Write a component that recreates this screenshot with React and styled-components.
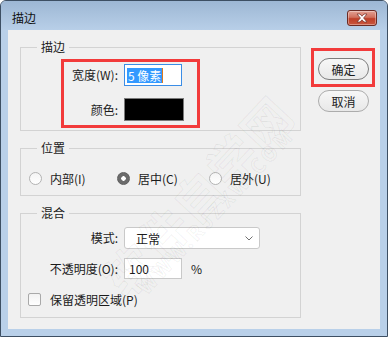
import React from "react";
import styled, { createGlobalStyle } from "styled-components";

const GlobalStyle = createGlobalStyle`
  html, body {
    margin: 0;
    padding: 0;
    background: #ffffff;
  }
  body {
    font-family: "Noto Sans CJK SC", "Microsoft YaHei", sans-serif;
    font-size: 12px;
    color: #1b1b1b;
  }
`;

const Window = styled.div`
  box-sizing: border-box;
  width: 388px;
  height: 337px;
  display: flex;
  flex-direction: column;
  padding: 0 7px 7px;
  border: 1px solid #3d4f63;
  border-radius: 6px 6px 0 0;
  background: #b9d0e9;
  overflow: hidden;
`;

const TitleBar = styled.div`
  box-sizing: border-box;
  height: 29px;
  margin: 0 -7px;
  padding: 5px 10px 0 11px;
  display: flex;
  align-items: center;
  justify-content: space-between;
  background: linear-gradient(#9db7d4, #b8cfe8);
`;

const Title = styled.span`
  font-size: 12px;
  line-height: 16px;
  color: #111;
`;

const CloseButton = styled.div`
  box-sizing: border-box;
  width: 30px;
  height: 16px;
  display: flex;
  align-items: center;
  justify-content: center;
  border: 1px solid #6b2b24;
  border-radius: 3px;
  background: linear-gradient(#e3a194 0%, #d1705d 45%, #bf3f28 55%, #c9573f 100%);
  box-shadow: inset 0 0 0 1px rgba(255, 255, 255, 0.35);
`;

const Client = styled.div`
  position: relative;
  flex: 1;
  display: flex;
  gap: 10px;
  padding: 10px 0 0 12px;
  background: #f0f0f0;
  overflow: hidden;
`;

const MainColumn = styled.div`
  width: 281px;
  display: flex;
  flex-direction: column;
  gap: 10px;
`;

const Group = styled.fieldset`
  margin: 0;
  padding: 0;
  min-inline-size: 0;
  border: 1px solid #d3d3d3;
`;

const Legend = styled.legend`
  margin-left: 16px;
  padding: 0 4px;
  font-size: 12px;
  line-height: 14px;
`;

const Marker = styled.div`
  border: 3px solid #f23b3b;
  width: fit-content;
  display: flex;
  flex-direction: column;
  gap: ${(p) => p.gap || 0}px;
  padding: ${(p) => p.pad};
  margin: ${(p) => p.margin || 0};
`;

const Row = styled.div`
  display: flex;
  align-items: center;
  margin-top: ${(p) => p.top || 0}px;
`;

const Label = styled.span`
  width: ${(p) => p.width}px;
  margin-right: 6px;
  text-align: right;
  white-space: nowrap;
  line-height: 14px;
`;

const WidthInput = styled.div`
  box-sizing: border-box;
  width: 58px;
  height: 22px;
  display: flex;
  align-items: center;
  padding-left: 2px;
  border: 1px solid #3b8de6;
  background: #fff;
`;

const Selection = styled.span`
  background: #3399ff;
  color: #fff;
  line-height: 15px;
  padding: 0 1px;
  white-space: nowrap;
`;

const Caret = styled.span`
  width: 1px;
  height: 15px;
  background: #e07a1c;
`;

const Swatch = styled.div`
  box-sizing: border-box;
  width: 60px;
  height: 23px;
  border: 1px solid #7a7a7a;
  background: ${(p) => p.color};
`;

const RadioRow = styled.div`
  display: flex;
  align-items: center;
  height: 16px;
  padding: 15px 0 9px 8px;
`;

const RadioOption = styled.label`
  width: ${(p) => p.width}px;
  display: flex;
  align-items: center;
  gap: 8px;
  white-space: nowrap;
`;

const Radio = styled.span`
  box-sizing: border-box;
  width: 13px;
  height: 13px;
  border-radius: 50%;
  border: 1px solid ${(p) => (p.checked ? "#5e5e5e" : "#b3b3b3")};
  background: ${(p) =>
    p.checked
      ? "radial-gradient(circle, #ffffff 0 2px, #6b6b6b 2.5px)"
      : "linear-gradient(#f4f4f4, #ffffff)"};
`;

const BlendBody = styled.div`
  display: flex;
  flex-direction: column;
  padding: 7px 0 12px;
`;

const Select = styled.div`
  box-sizing: border-box;
  width: 136px;
  height: 22px;
  display: flex;
  align-items: center;
  justify-content: space-between;
  padding: 0 6px 0 11px;
  border: 1px solid #c9c9c9;
  border-radius: 3px;
  background: #fff;
`;

const TextInput = styled.div`
  box-sizing: border-box;
  width: 58px;
  height: 21px;
  display: flex;
  align-items: center;
  padding-left: 4px;
  border: 1px solid #c9c9c9;
  background: #fff;
`;

const Unit = styled.span`
  margin-left: 9px;
`;

const CheckRow = styled.label`
  display: flex;
  align-items: center;
  gap: 9px;
  height: 12px;
  margin-top: 14px;
  padding-left: 7px;
`;

const Checkbox = styled.span`
  box-sizing: border-box;
  width: 13px;
  height: 13px;
  border: 1px solid #a9a9a9;
  border-radius: 2px;
  background: linear-gradient(#f2f2f2, #ffffff);
`;

const ButtonColumn = styled.div`
  display: flex;
  flex-direction: column;
  align-items: flex-start;
  padding-top: 8px;
`;

const PillButton = styled.div`
  box-sizing: border-box;
  width: 51px;
  height: 22px;
  display: flex;
  align-items: center;
  justify-content: center;
  border: 1px solid ${(p) => (p.primary ? "#7d7d7d" : "#acacac")};
  border-radius: 11px;
  background: linear-gradient(#f7f7f7, #e8e8e8);
  margin: ${(p) => p.margin || 0};
  font-size: 12px;
`;

// faint diagonal site watermark lying over the dialog
const Watermark = styled.div`
  position: absolute;
  left: ${(p) => p.x}px;
  top: ${(p) => p.y}px;
  transform: rotate(-47deg);
  transform-origin: left top;
  font-size: ${(p) => p.size}px;
  font-weight: bold;
  letter-spacing: ${(p) => p.spacing || 0}px;
  color: transparent;
  -webkit-text-stroke: 1px rgba(0, 0, 0, 0.06);
  white-space: nowrap;
  pointer-events: none;
`;

const CloseIcon = () => (
  <svg width="14" height="10" viewBox="0 0 14 10">
    <path
      d="M2 1 L5 1 L7 3.2 L9 1 L12 1 L8.6 5 L12 9 L9 9 L7 6.8 L5 9 L2 9 L5.4 5 Z"
      fill="#ffffff"
      stroke="#7a3a32"
      strokeWidth="0.8"
      strokeLinejoin="round"
    />
  </svg>
);

const Chevron = () => (
  <svg width="8" height="5" viewBox="0 0 8 5">
    <path d="M0.5 0.5 L4 4 L7.5 0.5" fill="none" stroke="#707070" strokeWidth="1" />
  </svg>
);

const App = () => {
  return (
    <>
      <GlobalStyle />
      <Window>
        <TitleBar>
          <Title>描边</Title>
          <CloseButton>
            <CloseIcon />
          </CloseButton>
        </TitleBar>
        <Client>
          <MainColumn>
            <Group>
              <Legend>描边</Legend>
              <Marker gap={12} pad="2px 13px 4px 0" margin="5px 0 2px 40px">
                <Row>
                  <Label width={54}>宽度(W):</Label>
                  <WidthInput>
                    <Selection>5 像素</Selection>
                    <Caret />
                  </WidthInput>
                </Row>
                <Row>
                  <Label width={54}>颜色:</Label>
                  <Swatch color="#000000" />
                </Row>
              </Marker>
            </Group>

            <Group>
              <Legend>位置</Legend>
              <RadioRow>
                <RadioOption width={88}>
                  <Radio />
                  内部(I)
                </RadioOption>
                <RadioOption width={92}>
                  <Radio checked />
                  居中(C)
                </RadioOption>
                <RadioOption width={80}>
                  <Radio />
                  居外(U)
                </RadioOption>
              </RadioRow>
            </Group>

            <Group>
              <Legend>混合</Legend>
              <BlendBody>
                <Row>
                  <Label width={97}>模式:</Label>
                  <Select>
                    正常
                    <Chevron />
                  </Select>
                </Row>
                <Row top={9}>
                  <Label width={97}>不透明度(O):</Label>
                  <TextInput>100</TextInput>
                  <Unit>%</Unit>
                </Row>
                <CheckRow>
                  <Checkbox />
                  保留透明区域(P)
                </CheckRow>
              </BlendBody>
            </Group>
          </MainColumn>

          <ButtonColumn>
            <Marker pad="7px 3px 4px 4px">
              <PillButton primary>确定</PillButton>
            </Marker>
            <PillButton margin="3px 0 0 7px">取消</PillButton>
          </ButtonColumn>

          <Watermark x={78} y={232} size={48} spacing={2}>
            软件自学网
          </Watermark>
          <Watermark x={122} y={250} size={20} spacing={3}>
            WWW.RJZXW.COM
          </Watermark>
        </Client>
      </Window>
    </>
  );
};

export default App;
